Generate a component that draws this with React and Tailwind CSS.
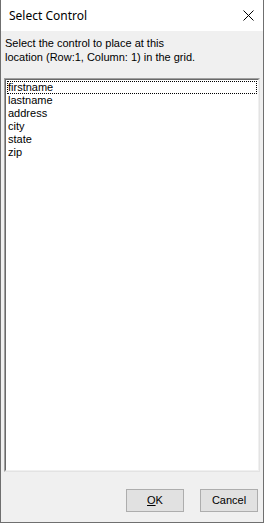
export default function App() {
  const fields = ['firstname', 'lastname', 'address', 'city', 'state', 'zip'];

  return (
    <div className="w-[264px] h-[523px] flex flex-col bg-[#f0f0f0] border-x border-b border-[#6f6f6f] text-black" style={{ fontFamily: '"Liberation Sans", Arial, sans-serif' }}>
      {/* Title bar */}
      <div className="h-[31px] shrink-0 bg-white flex items-center justify-between pl-[8px] pr-[9px]">
        <span className="text-[12px]" style={{ fontFamily: '"Noto Sans", "Liberation Sans", sans-serif' }}>Select Control</span>
        <svg width="11" height="11" viewBox="0 0 11 11">
          <path d="M0.5 0.5 L10.5 10.5 M10.5 0.5 L0.5 10.5" stroke="#000" strokeWidth="1" fill="none" />
        </svg>
      </div>

      {/* Prompt */}
      <p className="px-[4px] pt-[5px] text-[11px] leading-[14px] h-[47px] shrink-0">
        Select the control to place at this
        <br />
        location (Row:1, Column: 1) in the grid.
      </p>

      {/* List box */}
      <div className="mx-[3px] flex-1 border border-[#a0a0a0] border-r-[#e3e3e3] border-b-[#e3e3e3] bg-white">
        <div className="h-full border border-[#696969] border-r-[#f0f0f0] border-b-[#f0f0f0] p-px">
          <ul className="text-[11px] leading-[13px]">
            {fields.map((f, i) => (
              <li key={f} className={i === 0 ? 'pl-[1px] outline-1 outline-dotted outline-black -outline-offset-1' : 'pl-[1px]'}>
                {f}
              </li>
            ))}
          </ul>
        </div>
      </div>

      {/* Buttons */}
      <div className="h-[50px] shrink-0 flex justify-end items-start gap-[16px] pt-[17px] pr-[5px]">
        <button className="w-[58px] h-[23px] bg-[#e1e1e1] border border-[#adadad] text-[11px]">
          <span className="underline">O</span>K
        </button>
        <button className="w-[58px] h-[23px] bg-[#e1e1e1] border border-[#adadad] text-[11px]">
          Cancel
        </button>
      </div>
    </div>
  );
}
